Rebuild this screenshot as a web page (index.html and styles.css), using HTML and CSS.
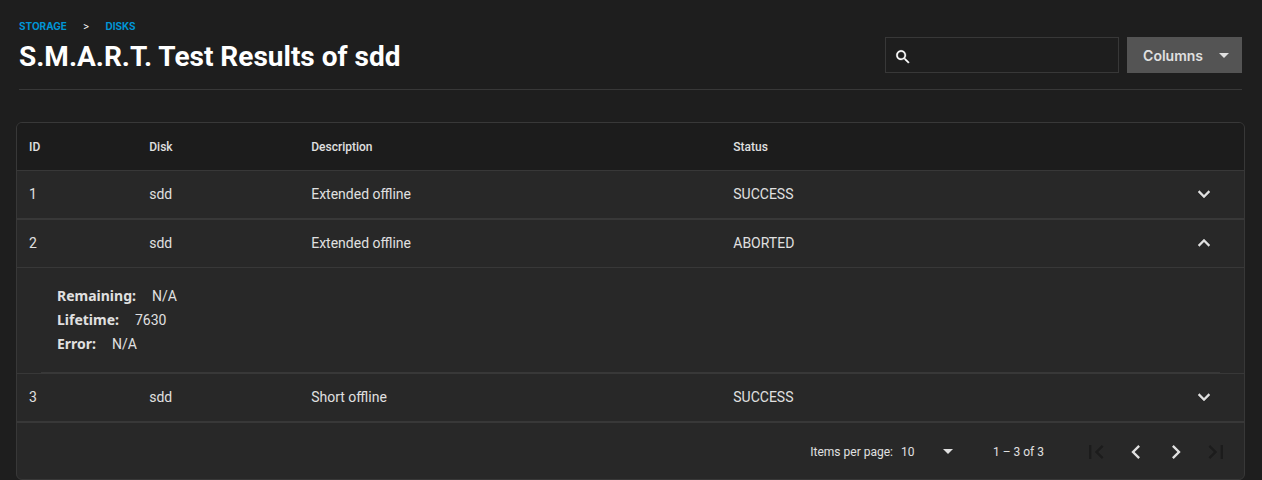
FILE: index.html
```html
<!DOCTYPE html>
<html lang="en">
<head>
<meta charset="utf-8">
<meta name="viewport" content="width=device-width, initial-scale=1">
<title>S.M.A.R.T. Test Results of sdd</title>
<link rel="stylesheet" href="styles.css">
</head>
<body>
<header class="page-header">
  <div class="heading">
    <nav class="breadcrumb" aria-label="Breadcrumb">
      <a href="#storage">STORAGE</a>
      <span class="separator">&gt;</span>
      <a href="#disks">DISKS</a>
    </nav>
    <h1 class="title">S.M.A.R.T. Test Results of sdd</h1>
  </div>
  <div class="actions">
    <label class="search">
      <svg class="search-icon" viewBox="0 0 24 24" aria-hidden="true"><path d="M15.5 14h-.79l-.28-.27C15.41 12.59 16 11.11 16 9.5 16 5.91 13.09 3 9.5 3S3 5.91 3 9.5 5.91 16 9.5 16c1.61 0 3.09-.59 4.23-1.57l.27.28v.79l5 4.99L20.49 19l-4.99-5zm-6 0C7.01 14 5 11.99 5 9.5S7.01 5 9.5 5 14 7.01 14 9.5 11.99 14 9.5 14z"/></svg>
      <input class="search-input" type="text" aria-label="Search">
    </label>
    <button class="columns-button" type="button">Columns
      <svg class="caret" viewBox="0 0 10 5" aria-hidden="true"><path d="M0 0h10L5 5z"/></svg>
    </button>
  </div>
</header>
<main class="card">
  <table class="results">
    <colgroup><col class="col-id"><col class="col-disk"><col class="col-description"><col><col class="col-toggle"></colgroup>
    <thead>
      <tr><th>ID</th><th>Disk</th><th>Description</th><th>Status</th><th></th></tr>
    </thead>
    <tbody>
      <tr class="row">
        <td>1</td><td>sdd</td><td>Extended offline</td><td>SUCCESS</td>
        <td class="toggle-cell"><button class="toggle" type="button" aria-label="Expand" aria-expanded="false"><svg class="chevron" viewBox="0 0 24 24"><path d="M16.59 8.59L12 13.17 7.41 8.59 6 10l6 6 6-6z"/></svg></button></td>
      </tr>
      <tr class="row open">
        <td>2</td><td>sdd</td><td>Extended offline</td><td>ABORTED</td>
        <td class="toggle-cell"><button class="toggle" type="button" aria-label="Collapse" aria-expanded="true"><svg class="chevron" viewBox="0 0 24 24"><path d="M12 8l-6 6 1.41 1.41L12 10.83l4.59 4.58L18 14z"/></svg></button></td>
      </tr>
      <tr class="details-row">
        <td colspan="5">
          <dl class="details">
            <div class="detail"><dt>Remaining:</dt><dd>N/A</dd></div>
            <div class="detail"><dt>Lifetime:</dt><dd>7630</dd></div>
            <div class="detail"><dt>Error:</dt><dd>N/A</dd></div>
          </dl>
        </td>
      </tr>
      <tr class="row">
        <td>3</td><td>sdd</td><td>Short offline</td><td>SUCCESS</td>
        <td class="toggle-cell"><button class="toggle" type="button" aria-label="Expand" aria-expanded="false"><svg class="chevron" viewBox="0 0 24 24"><path d="M16.59 8.59L12 13.17 7.41 8.59 6 10l6 6 6-6z"/></svg></button></td>
      </tr>
    </tbody>
  </table>
  <footer class="paginator">
    <label for="page-size">Items per page:</label>
    <div class="page-size">
      <select id="page-size"><option>10</option><option>20</option><option>50</option><option>100</option></select>
      <svg class="caret" viewBox="0 0 10 5" aria-hidden="true"><path d="M0 0h10L5 5z"/></svg>
    </div>
    <span class="range">1 – 3 of 3</span>
    <div class="pager">
      <button type="button" aria-label="First page" disabled><svg viewBox="0 0 24 24"><path d="M18.41 16.59L13.82 12l4.59-4.59L17 6l-6 6 6 6zM6 6h2v12H6z"/></svg></button>
      <button type="button" aria-label="Previous page"><svg viewBox="0 0 24 24"><path d="M15.41 7.41L14 6l-6 6 6 6 1.41-1.41L10.83 12z"/></svg></button>
      <button type="button" aria-label="Next page"><svg viewBox="0 0 24 24"><path d="M10 6L8.59 7.41 13.17 12l-4.58 4.59L10 18l6-6z"/></svg></button>
      <button type="button" aria-label="Last page" disabled><svg viewBox="0 0 24 24"><path d="M5.59 7.41L10.18 12l-4.59 4.59L7 18l6-6-6-6zM16 6h2v12h-2z"/></svg></button>
    </div>
  </footer>
</main>
</body>
</html>
```

FILE: styles.css
```css
* {
  box-sizing: border-box;
}

body {
  margin: 0;
  background: #1e1e1e;
  color: #e0e0e0;
  font-family: Roboto, "Liberation Sans", sans-serif;
  font-size: 14px;
}

button,
input,
select {
  margin: 0;
  padding: 0;
  border: 0;
  background: none;
  color: inherit;
  font: inherit;
}

svg {
  display: block;
  fill: currentColor;
}

.page-header {
  display: flex;
  justify-content: space-between;
  align-items: flex-end;
  margin: 0 20px 0 19px;
  padding: 19px 0 16px;
  border-bottom: 1px solid #383838;
}

.breadcrumb {
  display: flex;
  gap: 16px;
  color: #fff;
  font-family: Inter, Roboto, sans-serif;
  font-size: 10px;
  line-height: 14px;
}

.breadcrumb a {
  color: #0095d5;
  font-weight: 700;
  text-decoration: none;
}

.title {
  margin: 8px 0 0;
  color: #fff;
  font-family: Roboto, sans-serif;
  font-size: 28px;
  font-weight: 700;
  line-height: 32px;
}

.actions {
  display: flex;
  gap: 8px;
}

.search {
  display: flex;
  align-items: center;
  gap: 8px;
  width: 234px;
  height: 36px;
  padding: 3px 8px 0;
  border: 1px solid #383838;
  color: #fff;
}

.search-icon {
  flex: none;
  width: 18px;
  height: 18px;
  stroke: currentColor;
  stroke-width: 0.4;
}

.search-input {
  flex: 1;
  min-width: 0;
  outline: 0;
}

.columns-button {
  display: flex;
  align-items: center;
  gap: 16px;
  height: 36px;
  padding: 0 13px 0 16px;
  background: #545454;
  font-family: Inter, Roboto, sans-serif;
  font-weight: 600;
}

.caret {
  width: 10px;
  height: 5px;
}

.card {
  margin: 32px 17px 0 16px;
  overflow: hidden;
  border: 1px solid #383838;
  border-radius: 6px;
  background: #282828;
}

.results {
  width: 100%;
  table-layout: fixed;
  border-collapse: separate;
  border-spacing: 0;
}

.col-id {
  width: 9.8%;
}

.col-disk {
  width: 13.2%;
}

.col-description {
  width: 34.4%;
}

.col-toggle {
  width: 80px;
}

.results th {
  height: 48px;
  padding: 0 12px;
  border-bottom: 1px solid #383838;
  background: #1c1c1c;
  font-size: 12px;
  font-weight: 500;
  text-align: left;
}

.row td {
  height: 49px;
  padding: 0 12px 2px;
  border-bottom: 2px solid #383838;
}

.row.open td {
  height: 48px;
  border-bottom-width: 1px;
}

.row .toggle-cell {
  padding: 0 28px 2px;
}

.toggle {
  display: block;
}

.chevron {
  width: 24px;
  height: 24px;
  stroke: currentColor;
  stroke-width: 0.4;
}

.details-row td {
  padding: 0 24px;
  border-bottom: 1px solid #383838;
}

.details {
  margin: 0;
  padding: 16px;
  border-bottom: 1px solid #383838;
}

.detail {
  display: flex;
  gap: 16px;
  line-height: 24px;
}

.detail dt {
  font-family: "Noto Sans", Roboto, sans-serif;
  font-weight: 700;
}

.detail dd {
  margin: 0;
}

.paginator {
  display: flex;
  align-items: center;
  justify-content: flex-end;
  height: 56px;
  padding: 1px 8px 0 0;
  font-size: 12px;
}

.page-size {
  display: grid;
  align-items: center;
  width: 52px;
  margin: 0 40px 0 8px;
}

.page-size > * {
  grid-area: 1 / 1;
}

.page-size select {
  width: 100%;
  height: 24px;
  appearance: none;
}

.page-size .caret {
  justify-self: end;
  pointer-events: none;
}

.range {
  margin-right: 32px;
}

.pager {
  display: flex;
}

.pager button {
  display: grid;
  place-items: center;
  width: 40px;
  height: 40px;
}

.pager button:disabled {
  color: #1c1c1c;
}

.pager svg {
  width: 28px;
  height: 28px;
}
```
